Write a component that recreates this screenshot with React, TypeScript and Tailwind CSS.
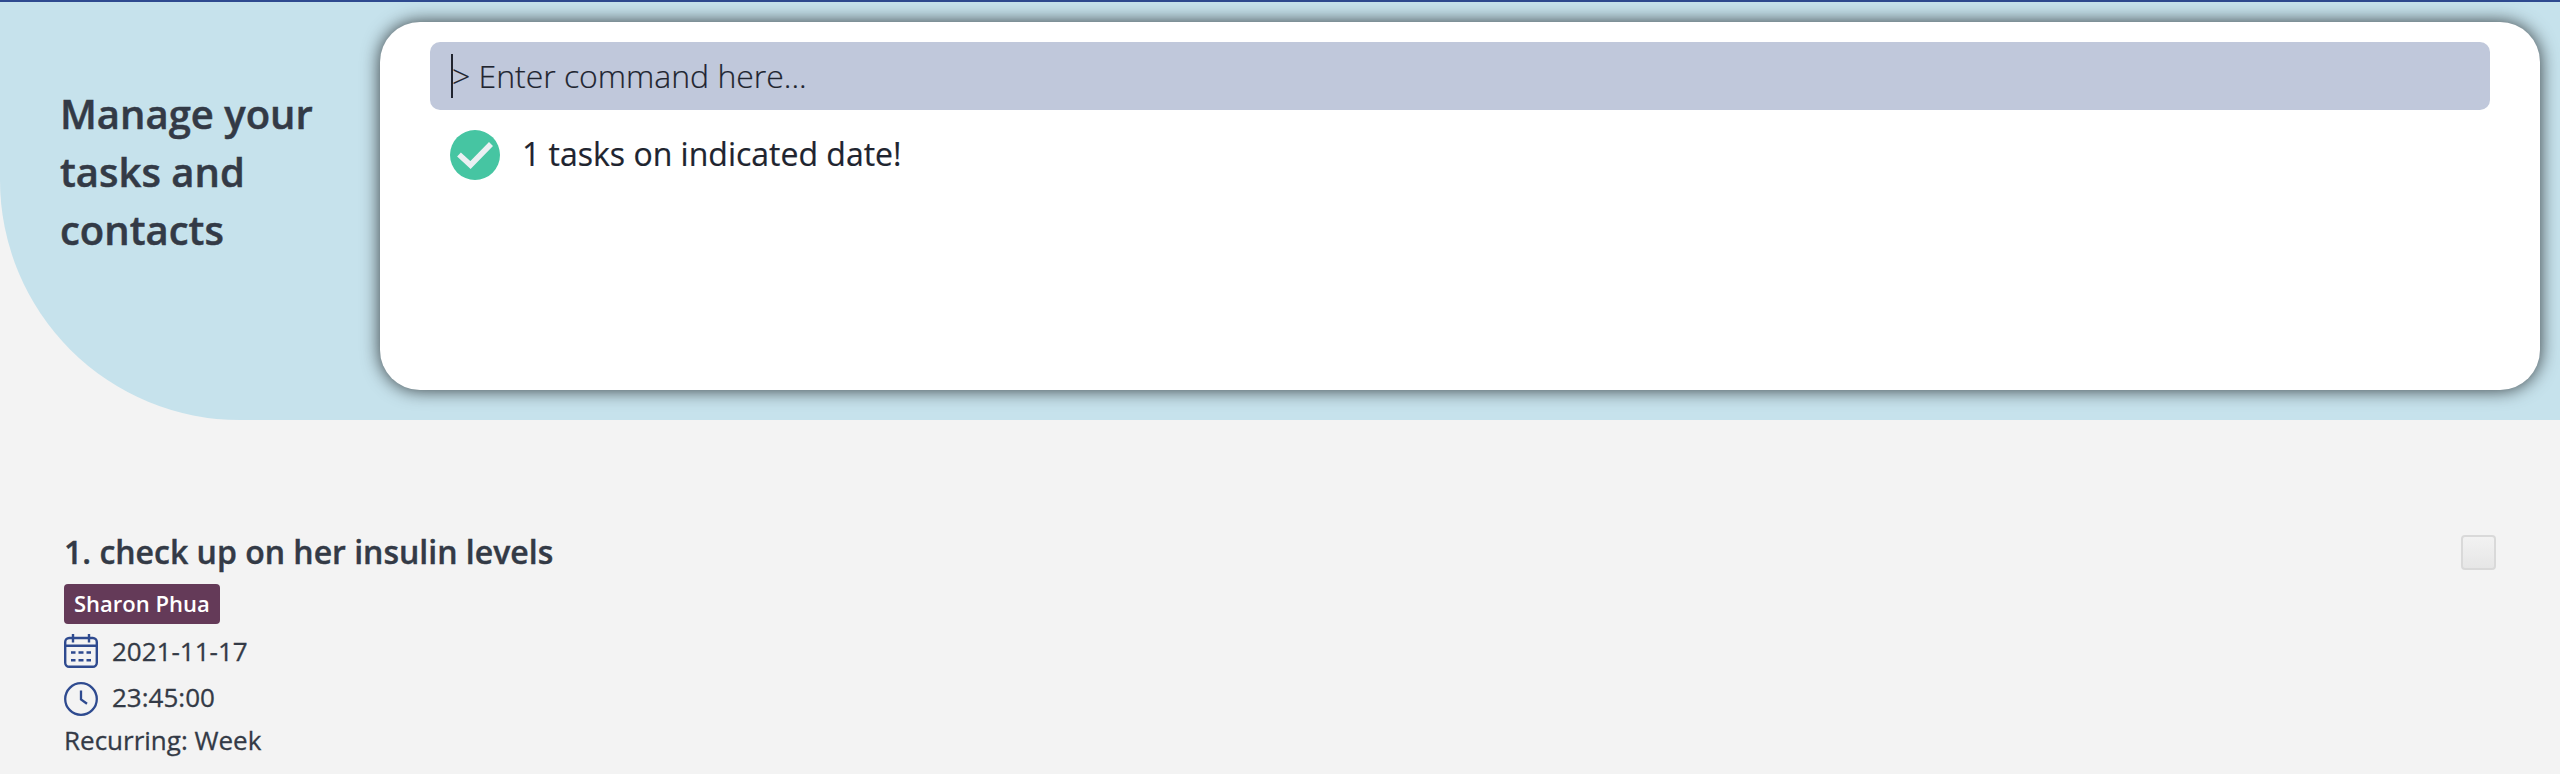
function CheckBadge() {
  return (
    <svg className="size-[50px] shrink-0" viewBox="0 0 50 50" aria-hidden="true">
      <circle cx="25" cy="25" r="25" fill="#46c5a2" />
      <path d="M9 24.5 L20.5 35 L41 14" fill="none" stroke="#ebf0f3" strokeWidth="5.6" />
    </svg>
  );
}

function CalendarIcon() {
  return (
    <svg className="size-[34px] shrink-0" viewBox="0 0 34 34" fill="none" stroke="#2e4a8f" strokeWidth="2.4" aria-hidden="true">
      <rect x="1.2" y="4" width="31.6" height="28.8" rx="4" />
      <path d="M1 11.8 H33 M9 0 V8.5 M25 0 V8.5" />
      <path d="M7 18.5 H11.5 M14.5 18.5 H19.5 M22.5 18.5 H27 M7 26.2 H11.5 M14.5 26.2 H19.5 M22.5 26.2 H27" />
    </svg>
  );
}

function ClockIcon() {
  return (
    <svg className="size-[34px] shrink-0" viewBox="0 0 34 34" fill="none" stroke="#2e4a8f" strokeWidth="2.3" aria-hidden="true">
      <circle cx="17" cy="17" r="15.8" />
      <path d="M17 8.5 V17.5 L23 21.8" />
    </svg>
  );
}

export default function App() {
  return (
    <div className="h-[774px] w-[2560px] overflow-hidden bg-[#f3f3f3] font-['Open_Sans',sans-serif] text-[#333a46]">
      <header className="flex h-[420px] rounded-bl-[240px] border-t-2 border-[#2e4a8f] bg-[#c6e2ec]">
        <h1 className="w-[380px] shrink-0 pt-[83px] pl-[60px] text-[40px] leading-[58px] font-semibold [-webkit-text-stroke:0.5px_#333a46]">
          Manage your
          <br />
          tasks and
          <br />
          contacts
        </h1>
        <section className="mt-5 h-[368px] w-[2160px] rounded-[40px] bg-white px-[50px] pt-5 text-[#20242f] shadow-[0_0_18px_rgba(0,0,0,0.75)]">
          <div className="flex h-[68px] items-center rounded-[10px] bg-[#c0c8db] pl-[21px]">
            <span className="h-11 w-0.5 bg-[#20242f]" />
            <span className="-ml-px text-[32px] leading-[44px] font-light tracking-[-0.03px] whitespace-pre [-webkit-text-stroke:0.2px_#20242f]">&gt; Enter command here...</span>
          </div>
          <div className="mt-5 flex items-center gap-[22px] pl-5">
            <CheckBadge />
            <p className="pb-0.5 text-[32px] leading-[44px] [-webkit-text-stroke:0.2px_#20242f]">1 tasks on indicated date!</p>
          </div>
        </section>
      </header>
      <main className="flex justify-between pt-[110px] pr-16 pl-16">
        <article className="flex flex-col items-start">
          <h2 className="text-[32px] leading-[44px] font-semibold [-webkit-text-stroke:0.4px_#333a46]">1. check up on her insulin levels</h2>
          <span className="mt-2.5 flex h-10 items-center rounded-[4px] bg-[#643a58] px-2.5 pb-0.5 text-[22px] leading-[30px] font-semibold text-white">
            Sharon Phua
          </span>
          <div className="mt-2.5 flex h-[34px] items-center gap-3.5 text-[26px] leading-[36px] [-webkit-text-stroke:0.3px_#333a46]">
            <CalendarIcon />
            <span>2021-11-17</span>
          </div>
          <div className="mt-3.5 flex h-[34px] items-center gap-3.5 text-[26px] leading-[36px] [-webkit-text-stroke:0.3px_#333a46]">
            <ClockIcon />
            <span className="pb-1">23:45:00</span>
          </div>
          <p className="mt-1.5 text-[26px] leading-[36px] [-webkit-text-stroke:0.3px_#333a46]">Recurring: Week</p>
        </article>
        <span className="mt-[5px] size-[35px] rounded-[4px] border-2 border-[#d9d9d9] bg-linear-to-b from-[#f2f2f2] to-[#e6e6e6]" />
      </main>
    </div>
  );
}
